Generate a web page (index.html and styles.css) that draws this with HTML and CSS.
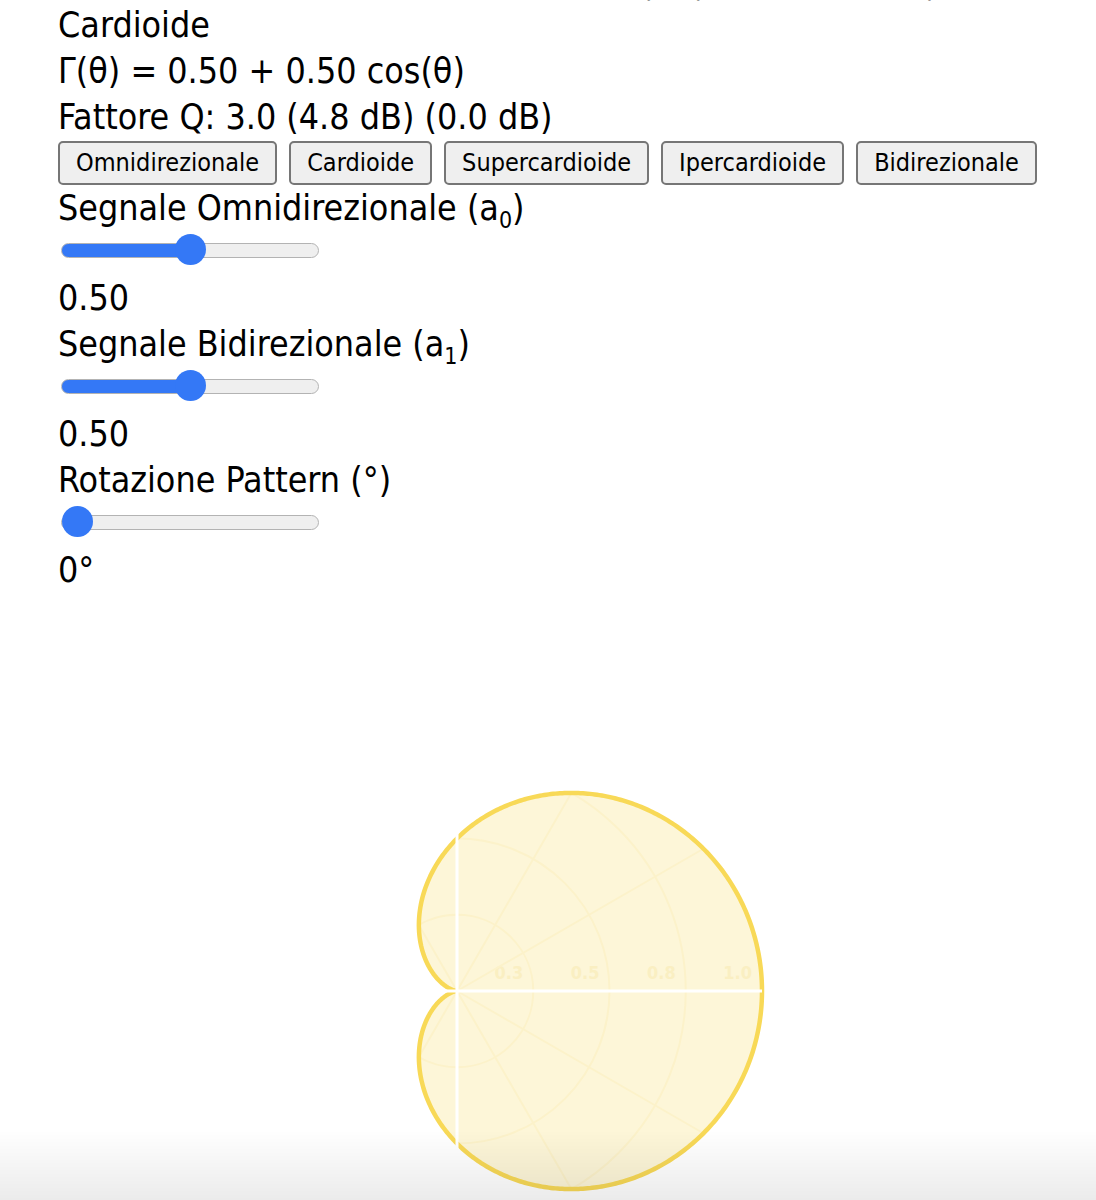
FILE: index.html
```html
<!DOCTYPE html>
<html lang="it">
<head>
  <meta charset="UTF-8">
  <meta name="viewport" content="width=device-width, initial-scale=1.0">
  <title>Pattern Polare Microfono</title>
  <link rel="stylesheet" href="styles.css">
</head>
<body>
  <div class="page">
    <div class="prev-line"><span class="t1">|</span><span class="t2">|</span><span class="t3">|</span></div>
    <div class="line" id="patternName">Cardioide</div>
    <div class="line" id="formula">Γ(θ) = 0.50 + 0.50 cos(θ)</div>
    <div class="line" id="qFactor">Fattore Q: 3.0 (4.8 dB) (0.0 dB)</div>

    <div class="presets">
      <button type="button" onclick="setPreset(1, 0)">Omnidirezionale</button>
      <button type="button" onclick="setPreset(0.5, 0.5)">Cardioide</button>
      <button type="button" onclick="setPreset(0.37, 0.63)">Supercardioide</button>
      <button type="button" onclick="setPreset(0.25, 0.75)">Ipercardioide</button>
      <button type="button" onclick="setPreset(0, 1)">Bidirezionale</button>
    </div>

    <div class="control">
      <label for="a0">Segnale Omnidirezionale (a<sub>0</sub>)</label>
      <input type="range" id="a0" min="0" max="1" step="0.01" value="0.5">
      <div class="value" id="a0Value">0.50</div>
    </div>

    <div class="control">
      <label for="a1">Segnale Bidirezionale (a<sub>1</sub>)</label>
      <input type="range" id="a1" min="0" max="1" step="0.01" value="0.5">
      <div class="value" id="a1Value">0.50</div>
    </div>

    <div class="control">
      <label for="rot">Rotazione Pattern (°)</label>
      <input type="range" id="rot" min="0" max="360" step="1" value="0">
      <div class="value" id="rotValue">0°</div>
    </div>

    <svg class="polar" viewBox="-320 -320 640 640" width="640" height="640">
      <defs>
        <clipPath id="shapeClip"><path id="clipPath" d=""></path></clipPath>
      </defs>
      <path id="shape" class="shape-fill" d=""></path>
      <g class="grid" clip-path="url(#shapeClip)" id="grid"></g>
      <path id="outline" class="shape-line" d=""></path>
      <line class="axis" x1="-305" y1="0" x2="305" y2="0"></line>
      <line class="axis" x1="0" y1="-305" x2="0" y2="305"></line>
    </svg>
  </div>
  <div class="bottom-fade"></div>

  <script>
    var R = 305;
    var NS = "http://www.w3.org/2000/svg";

    // griglia polare (cerchi + raggi ogni 30 gradi)
    function drawGrid() {
      var g = document.getElementById("grid");
      var labels = ["0.3", "0.5", "0.8", "1.0"];
      for (var i = 1; i <= 4; i++) {
        var c = document.createElementNS(NS, "circle");
        c.setAttribute("r", R * i / 4);
        g.appendChild(c);
        var t = document.createElementNS(NS, "text");
        t.setAttribute("x", R * i / 4 - 10);
        t.setAttribute("y", -12);
        t.textContent = labels[i - 1];
        g.appendChild(t);
      }
      for (var a = 0; a < 360; a += 30) {
        var l = document.createElementNS(NS, "line");
        var rad = a * Math.PI / 180;
        l.setAttribute("x1", 0);
        l.setAttribute("y1", 0);
        l.setAttribute("x2", R * Math.cos(rad));
        l.setAttribute("y2", R * Math.sin(rad));
        g.appendChild(l);
      }
    }

    function update() {
      var a0 = parseFloat(document.getElementById("a0").value);
      var a1 = parseFloat(document.getElementById("a1").value);
      var rot = parseFloat(document.getElementById("rot").value) * Math.PI / 180;

      document.getElementById("a0Value").textContent = a0.toFixed(2);
      document.getElementById("a1Value").textContent = a1.toFixed(2);
      document.getElementById("rotValue").textContent = Math.round(rot * 180 / Math.PI) + "°";
      document.getElementById("formula").textContent =
        "Γ(θ) = " + a0.toFixed(2) + " + " + a1.toFixed(2) + " cos(θ)";

      var d = "";
      for (var i = 0; i <= 720; i++) {
        var th = i / 720 * 2 * Math.PI;
        var r = Math.abs(a0 + a1 * Math.cos(th)) * R;
        var x = r * Math.cos(th + rot);
        var y = -r * Math.sin(th + rot);
        d += (i === 0 ? "M" : "L") + x.toFixed(2) + " " + y.toFixed(2);
      }
      d += "Z";
      document.getElementById("shape").setAttribute("d", d);
      document.getElementById("outline").setAttribute("d", d);
      document.getElementById("clipPath").setAttribute("d", d);
    }

    function setPreset(a0, a1) {
      document.getElementById("a0").value = a0;
      document.getElementById("a1").value = a1;
      paintRange(document.getElementById("a0"));
      paintRange(document.getElementById("a1"));
      update();
    }

    function paintRange(el) {
      var p = (el.value - el.min) / (el.max - el.min) * 100;
      el.style.setProperty("--fill", p + "%");
    }

    document.addEventListener("DOMContentLoaded", function () {
      drawGrid();
      var inputs = document.querySelectorAll("input[type=range]");
      for (var i = 0; i < inputs.length; i++) {
        paintRange(inputs[i]);
        inputs[i].addEventListener("input", function (e) {
          paintRange(e.target);
          update();
        });
      }
      update();
    });
  </script>
</body>
</html>
```

FILE: styles.css
```css
body {
  margin: 0;
  padding: 0;
  background: #fff;
  color: #000;
  font-family: "DejaVu Sans Condensed", "DejaVu Sans", sans-serif;
  font-stretch: condensed;
}
.page {
  padding: 0 0 0 58px;
  overflow: hidden;
}
.prev-line {
  height: 46px;
  margin-top: -44px;
  font-size: 31px;
  line-height: 52px;
  color: #444;
}
.prev-line span {
  display: inline-block;
}
.t1 { margin-left: 586px; }
.t2 { margin-left: 40px; }
.t3 { margin-left: 222px; }
.line {
  font-size: 35.5px;
  line-height: 46px;
}
.presets {
  display: flex;
  gap: 12px;
  margin-top: 1px;
}
.presets button {
  font-family: inherit;
  font-stretch: condensed;
  font-size: 25px;
  padding: 5px 16px 6px;
  background: #efefef;
  border: 2px solid #767676;
  border-radius: 5px;
  color: #000;
  cursor: pointer;
}
.presets button:hover {
  background: #e5e5e5;
}
.control label {
  display: block;
  font-size: 35.5px;
  line-height: 46px;
}
.control:first-of-type label {
  margin-top: 6px;
}
.control sub {
  font-size: 23px;
  line-height: 0;
}
.control input[type=range] {
  -webkit-appearance: none;
  appearance: none;
  display: block;
  width: 258px;
  height: 34px;
  margin: 2px 0 0 3px;
  background: transparent;
  --fill: 50%;
}
.control input[type=range]::-webkit-slider-runnable-track {
  height: 15px;
  border-radius: 8px;
  border: 1.5px solid #b3b3b3;
  box-sizing: border-box;
  background: linear-gradient(to right, #3478f6 var(--fill), #efefef var(--fill));
}
.control input[type=range]::-webkit-slider-thumb {
  -webkit-appearance: none;
  width: 31px;
  height: 31px;
  margin-top: -9.5px;
  border-radius: 50%;
  border: none;
  background: #3478f6;
}
.value {
  font-size: 35.5px;
  line-height: 46px;
  margin-top: 8px;
}
.polar {
  display: block;
  margin: 78px 0 0 79px;
}
.shape-fill {
  fill: #fdf6d8;
}
.shape-line {
  fill: none;
  stroke: #f8d957;
  stroke-width: 4.5;
}
.grid circle,
.grid line {
  fill: none;
  stroke: #fcf2ca;
  stroke-width: 2;
}
.grid text {
  fill: #faefc2;
  font-size: 18px;
  font-weight: bold;
  text-anchor: end;
}
.axis {
  stroke: #fff;
  stroke-width: 3;
}
.bottom-fade {
  position: fixed;
  left: 0;
  right: 0;
  bottom: 0;
  height: 70px;
  background: linear-gradient(to bottom, rgba(0, 0, 0, 0), rgba(0, 0, 0, 0.08));
  pointer-events: none;
}
```
